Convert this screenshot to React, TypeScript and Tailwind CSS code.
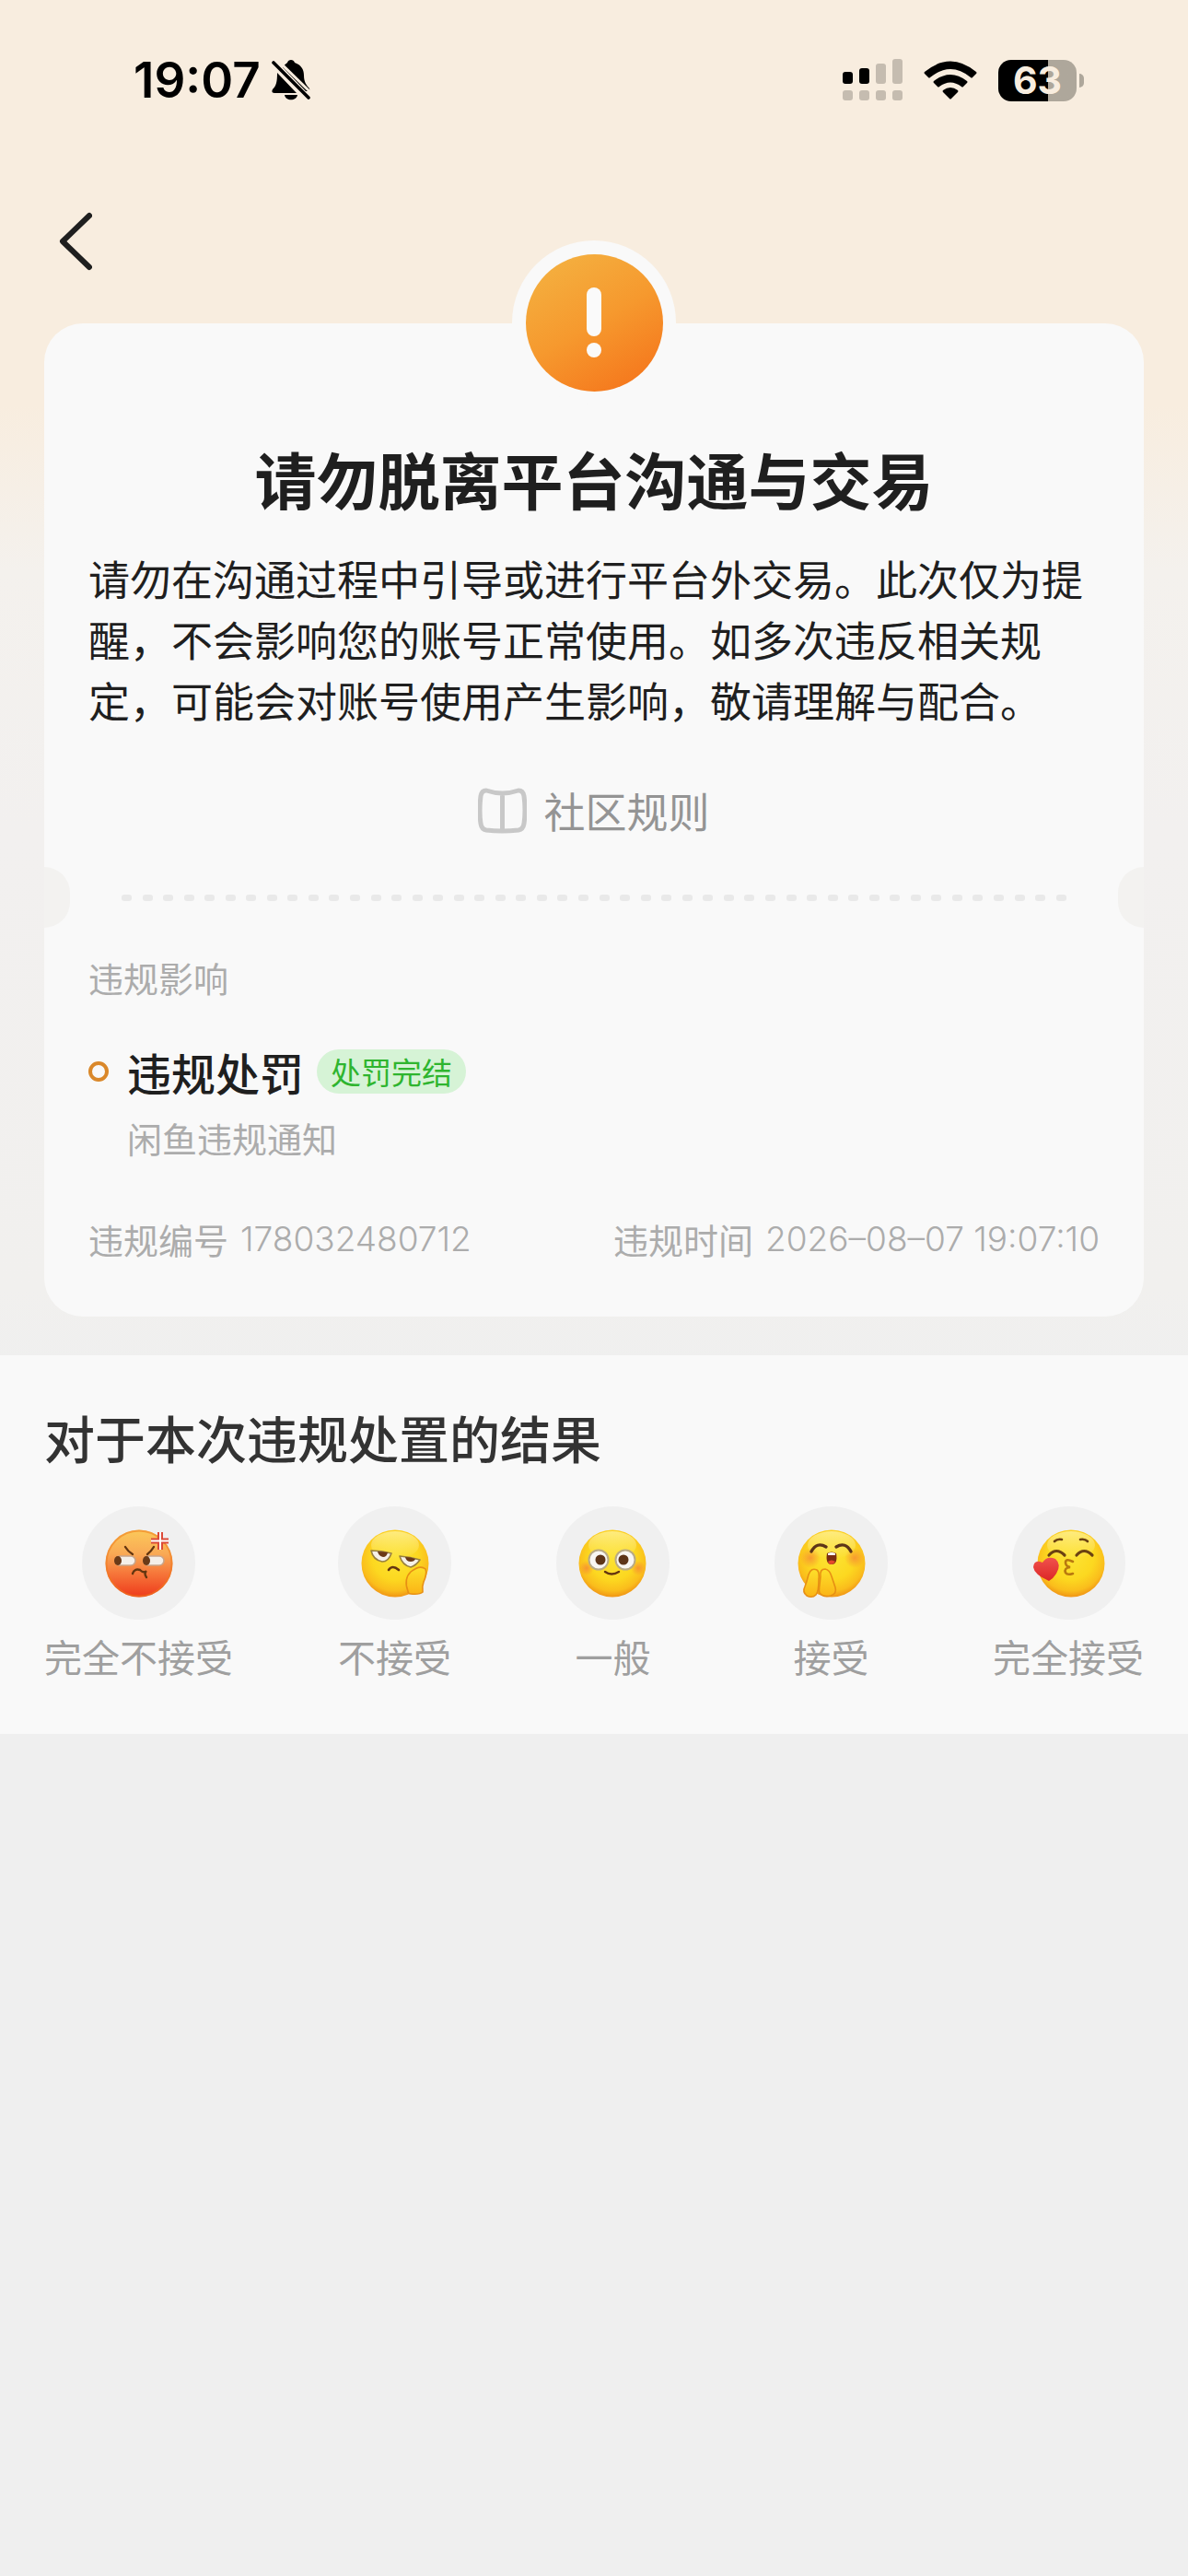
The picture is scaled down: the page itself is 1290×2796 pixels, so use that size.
import type { ReactNode } from "react";

function StatusBar() {
  return (
    <div className="flex h-[174px] items-center justify-between pl-[145px] pr-[113px]">
      <div className="flex items-center gap-3">
        <time className="font-['Inter',sans-serif] text-[53px] font-semibold leading-none text-black">19:07</time>
        <svg className="h-[46px] w-[44px]" viewBox="0 0 44 46" aria-label="静音">
          <path
            d="M12 9C14 6 16 5 17 4C18 0 24 0 25 4C33 7 35 12 35 18C35 25 38 29 41 32Q42 34 40 35L37 35Z"
            fill="#000"
          />
          <path d="M6 15L27 37H3Q-1 37 1 33C5 29 6 25 6 15ZM14 39H28C27 46 15 46 14 39Z" fill="#000" />
          <path d="M5 0L44 38" stroke="#f8eddf" strokeWidth="3" />
          <path d="M2 4L40 42" stroke="#000" strokeWidth="3.6" strokeLinecap="round" />
        </svg>
      </div>
      <div className="flex items-center gap-[23px]">
        <svg className="h-[46px] w-[65px]" viewBox="0 0 65 46" aria-label="信号">
          <rect x="0" y="14" width="11" height="13" rx="3" />
          <rect x="18" y="10" width="11" height="17" rx="3" />
          <g fill="#c5bcb0">
            <rect x="36" y="5" width="11" height="22" rx="3" />
            <rect x="54" y="0" width="11" height="27" rx="3" />
            <rect x="0" y="34" width="11" height="11" rx="3" />
            <rect x="18" y="34" width="11" height="11" rx="3" />
            <rect x="36" y="34" width="11" height="11" rx="3" />
            <rect x="54" y="34" width="11" height="11" rx="3" />
          </g>
        </svg>
        <svg className="h-[43px] w-[58px]" viewBox="0 0 58 43" aria-label="无线网络">
          <path d="M1 12Q29 -11 57 12Q58 13 57 14L53 18Q52 19 51 18Q29 0 7 18Q6 19 5 18L1 14Q0 13 1 12Z" />
          <path d="M11 22Q29 8 47 22Q48 23 47 24L43 28Q42 29 41 28Q29 19 17 28Q16 29 15 28L11 24Q10 23 11 22Z" />
          <path d="M21 32Q29 26 37 32Q38 33 37 34L30 41Q29 42 28 41L21 34Q20 33 21 32Z" />
        </svg>
        <div className="flex items-center gap-[3px]" aria-label="电量 63%">
          <div className="flex h-[45px] w-[85px] items-center justify-center rounded-[14px] bg-linear-to-r from-black from-[63%] to-[#aea79b] to-[63%]">
            <span className="font-['Inter',sans-serif] text-[41px] font-bold leading-none text-[#f8eddf]">63</span>
          </div>
          <div className="h-[15px] w-[5px] rounded-r-full bg-[#aea79b]" />
        </div>
      </div>
    </div>
  );
}

function AlertBadge() {
  return (
    <div className="absolute -top-[90px] left-1/2 flex size-[178px] -translate-x-1/2 items-center justify-center rounded-full bg-[#f9f9f9]">
      <div className="flex size-[149px] flex-col items-center justify-center gap-[7px] rounded-full bg-[linear-gradient(150deg,#f4b040_8%,#f6992e_50%,#f5761c_92%)]">
        <div className="h-[53px] w-4 rounded-full bg-[#fafafa]" />
        <div className="size-4 rounded-full bg-[#fafafa]" />
      </div>
    </div>
  );
}

function TicketDivider() {
  return (
    <div className="flex items-center justify-between">
      <div className="h-[66px] w-7 rounded-r-full bg-[#f3f2f0]" />
      <div className="mx-14 flex flex-1 justify-between">
        {Array.from({ length: 46 }, (_, i) => (
          <div key={i} className="h-[7px] w-[11px] rounded-[3px] bg-[#e9e9e9]" />
        ))}
      </div>
      <div className="h-[66px] w-7 rounded-l-full bg-[#f3f2f0]" />
    </div>
  );
}

function FaceDefs() {
  return (
    <svg className="absolute size-0" aria-hidden="true">
      <defs>
        <radialGradient id="yellow" cx="0.5" cy="0.4" r="0.62">
          <stop offset="0" stopColor="#fce334" />
          <stop offset="0.55" stopColor="#fcd820" />
          <stop offset="0.82" stopColor="#fabd1c" />
          <stop offset="1" stopColor="#ee8c14" />
        </radialGradient>
        <linearGradient id="shine" x1="0" y1="0" x2="0" y2="1">
          <stop offset="0" stopColor="#fff3a0" stopOpacity="0.75" />
          <stop offset="1" stopColor="#fff3a0" stopOpacity="0" />
        </linearGradient>
        <linearGradient id="red" x1="0" y1="0" x2="0" y2="1">
          <stop offset="0" stopColor="#fbc95a" />
          <stop offset="0.35" stopColor="#f9aa55" />
          <stop offset="0.65" stopColor="#f6763a" />
          <stop offset="1" stopColor="#ee3a1b" />
        </linearGradient>
        <linearGradient id="hand" x1="0" y1="0" x2="0" y2="1">
          <stop offset="0" stopColor="#fde02a" />
          <stop offset="1" stopColor="#fbb416" />
        </linearGradient>
        <linearGradient id="heart" x1="0" y1="0" x2="0" y2="1">
          <stop offset="0" stopColor="#f0524c" />
          <stop offset="1" stopColor="#dc2626" />
        </linearGradient>
        <radialGradient id="blush">
          <stop offset="0" stopColor="#f5793a" stopOpacity="0.65" />
          <stop offset="1" stopColor="#f5793a" stopOpacity="0" />
        </radialGradient>
      </defs>
    </svg>
  );
}

function YellowHead({ cx = 41 }: { cx?: number }) {
  return (
    <>
      <circle cx={cx} cy="41" r="36.5" fill="url(#yellow)" />
      <ellipse cx={cx} cy="21" rx="26" ry="15" fill="url(#shine)" />
    </>
  );
}

function AngryFace() {
  return (
    <>
      <circle cx="41" cy="41" r="36.5" fill="url(#red)" />
      <circle cx="41" cy="41" r="35.5" fill="none" stroke="#ee7a1c" strokeOpacity="0.55" strokeWidth="2" />
      <g fill="#f4efe9" stroke="#c9a58a" strokeWidth="1.6">
        <rect x="15" y="33" width="22" height="10" rx="5" />
        <rect x="46" y="33" width="22" height="10" rx="5" />
      </g>
      <ellipse cx="18" cy="38" rx="4" ry="5" fill="#6b3a17" />
      <ellipse cx="49" cy="38" rx="4" ry="5" fill="#6b3a17" />
      <g fill="none" stroke="#643610" strokeWidth="2.4" strokeLinecap="round">
        <path d="M26 23Q29 28 34 31M57 23Q54 28 50 31" />
        <path d="M34 52Q36 46 42 48Q46 52 49 49Q46 52 49 56" />
      </g>
      <path d="M64 7V26M54 16.5H73" fill="none" stroke="#fff" strokeWidth="5" />
      <path
        d="M62 7V14.5H54M66 7V14.5H73M62 26V18.5H54M66 26V18.5H73"
        fill="none"
        stroke="#dc4a38"
        strokeWidth="2"
      />
    </>
  );
}

function UnhappyFace() {
  return (
    <>
      <YellowHead />
      <g fill="#f6f1e8" stroke="#98803f" strokeWidth="1.6" strokeLinejoin="round">
        <path d="M15 27Q26 27 37 30Q34 39 27 39Q17 37 15 27Z" />
        <path d="M46 33Q58 34 68 37Q64 43 58 45Q49 43 46 33Z" />
      </g>
      <path
        d="M22 28Q28 28 33 29Q32 34 28 34Q23 33 22 28ZM52 34Q58 34 63 36Q62 39 58 39Q53 39 52 34Z"
        fill="#6b3a17"
      />
      <path d="M34 48Q38 42 45 48" fill="none" stroke="#643610" strokeWidth="2.6" strokeLinecap="round" />
      <path
        d="M55 71Q50 58 58 50Q68 42 74 47Q76 52 72 61Q70 66 71 72Q68 75 58 74Q55 74 55 71Z"
        fill="url(#hand)"
        stroke="#e78f14"
        strokeWidth="1.6"
      />
    </>
  );
}

function NeutralFace() {
  return (
    <>
      <YellowHead cx={40} />
      <circle cx="12" cy="46" r="8" fill="url(#blush)" />
      <circle cx="68" cy="46" r="8" fill="url(#blush)" />
      <g fill="#f8f6f2" stroke="#b9aa84" strokeWidth="2">
        <circle cx="25" cy="37" r="10.5" />
        <circle cx="54" cy="37" r="10.5" />
      </g>
      <circle cx="27" cy="37" r="5.5" fill="#5d3518" />
      <circle cx="52" cy="37" r="5.5" fill="#5d3518" />
      <path d="M32 50Q39 55 47 50" fill="none" stroke="#643610" strokeWidth="2.4" strokeLinecap="round" />
    </>
  );
}

function HappyFace() {
  return (
    <>
      <YellowHead />
      <circle cx="18" cy="35" r="11" fill="url(#blush)" />
      <circle cx="66" cy="35" r="11" fill="url(#blush)" />
      <path
        d="M19 28Q25 17 35 23M46 23Q56 17 62 28"
        fill="none"
        stroke="#5d3518"
        strokeWidth="3.4"
        strokeLinecap="round"
      />
      <path d="M36 30Q41 27 46 30Q48 42 41 42Q34 42 36 30Z" fill="#7a2d12" />
      <path d="M37 30Q41 28 45 30V32H37Z" fill="#fff" />
      <path d="M37 39Q41 36 45 39Q43 42 41 42Q38 42 37 39Z" fill="#e5482c" />
      <g fill="url(#hand)" stroke="#e78f14" strokeWidth="1.6">
        <path d="M16 53Q19 45 25 48Q28 50 27 58Q27 72 24 75Q20 79 14 76Q9 72 12 66Q14 61 16 53Z" />
        <path d="M29 55Q28 47 34 47Q39 48 41 55L45 67Q47 74 40 76Q32 78 28 73Q27 71 28 64Z" />
      </g>
    </>
  );
}

function KissFace() {
  return (
    <>
      <YellowHead cx={44} />
      <g fill="none" stroke="#6b4212" strokeLinecap="round">
        <path d="M26 17Q29 14 34 15M54 15Q59 14 62 17" strokeWidth="2.6" />
        <path d="M20 32Q28 23 37 32M50 32Q58 23 67 32" strokeWidth="3.2" />
        <path d="M46 39Q38 35 38 40Q38 44 43 45Q36 46 38 51Q40 54 46 52" stroke="#b9790f" strokeWidth="2.6" />
      </g>
      <path d="M20 60Q4 53 3 45Q4 36 13 40Q18 32 27 36Q34 42 28 52Q25 57 20 60Z" fill="url(#heart)" />
    </>
  );
}

const choices: { label: string; face: ReactNode }[] = [
  { label: "完全不接受", face: <AngryFace /> },
  { label: "不接受", face: <UnhappyFace /> },
  { label: "一般", face: <NeutralFace /> },
  { label: "接受", face: <HappyFace /> },
  { label: "完全接受", face: <KissFace /> },
];

function RecordField({ label, value }: { label: string; value: string }) {
  return (
    <p className="flex items-center gap-[13px]">
      <span>{label}</span>
      <span className="font-['Inter',sans-serif] text-[37px] font-light">{value}</span>
    </p>
  );
}

export default function App() {
  return (
    <div
      lang="zh-CN"
      className="min-h-screen bg-[#efefef] bg-[linear-gradient(#f8eddf_0px,#f8eddf_440px,#f4f1ed_620px,#f2f0ef_900px,#f1f0ee_1400px,#efefef_1500px)] bg-no-repeat font-['Noto_Sans_CJK_SC',sans-serif] text-[#1f1f1f]"
    >
      <FaceDefs />
      <StatusBar />
      <header className="flex h-[177px] items-start px-12 pt-[50px]">
        <button type="button" aria-label="返回" className="flex h-[76px] w-16 items-center pl-4">
          <svg
            className="h-16 w-9"
            viewBox="0 0 36 64"
            fill="none"
            stroke="#1f1f1f"
            strokeWidth="6"
            strokeLinecap="round"
            strokeLinejoin="round"
          >
            <path d="M33 4L4 32L33 60" />
          </svg>
        </button>
      </header>

      <main>
        <section className="relative mx-12 rounded-[42px] bg-[#f9f9f9]">
          <AlertBadge />
          <div className="px-12 pt-[126px]">
            <h1 className="text-center text-[67px] font-bold leading-[84px]">请勿脱离平台沟通与交易</h1>
            <p className="mt-[34px] text-[45px] leading-[66px]">
              请勿在沟通过程中引导或进行平台外交易。此次仅为提醒，不会影响您的账号正常使用。如多次违反相关规定，可能会对账号使用产生影响，敬请理解与配合。
            </p>
            <div className="mt-[54px] flex justify-center">
              <a href="#rules" className="flex items-center gap-[18px] text-[45px] leading-[66px] text-[#949494]">
                <svg
                  className="h-[50px] w-[53px]"
                  viewBox="0 0 53 50"
                  fill="none"
                  stroke="#c8c8c8"
                  strokeWidth="5"
                  strokeLinejoin="round"
                  aria-hidden="true"
                >
                  <path d="M26.5 6Q18 6 9 3Q4 3 3 9Q1 25 3 39Q4 45 9 46Q26 48 44 46Q49 45 50 39Q52 25 50 9Q49 3 44 3Q35 6 26.5 6ZM26.5 6V46" />
                </svg>
                社区规则
              </a>
            </div>
          </div>
          <div className="mt-7">
            <TicketDivider />
          </div>
          <div className="px-12 pb-14 pt-[26px] text-[38px] leading-[56px] text-[#acacac]">
            <h2>违规影响</h2>
            <div className="mt-[38px] flex items-center">
              <span className="size-[22px] rounded-full border-4 border-[#da882a]" />
              <h3 className="ml-5 text-[48px] font-medium leading-[72px] text-[#1f1f1f]">违规处罚</h3>
              <span className="ml-[14px] flex h-12 items-center rounded-full bg-[#d6f3d6] px-[15px] text-[33px] leading-none text-[#2fb52f]">
                处罚完结
              </span>
            </div>
            <p className="ml-[42px] mt-2">闲鱼违规通知</p>
            <div className="mt-[54px] flex justify-between">
              <RecordField label="违规编号" value="178032480712" />
              <RecordField label="违规时间" value="2026–08–07 19:07:10" />
            </div>
          </div>
        </section>

        <section className="mt-[42px] bg-[#f9f9f9] px-12 pb-[54px] pt-12">
          <h2 className="text-[55px] font-medium leading-[80px] text-[#333333]">对于本次违规处置的结果</h2>
          <div className="mt-9 flex justify-between">
            {choices.map((choice) => (
              <button
                key={choice.label}
                type="button"
                className="flex flex-col items-center gap-2 text-[41px] leading-[62px] text-[#9f9f9f]"
              >
                <span className="flex size-[123px] items-center justify-center rounded-full bg-[#f0f0f0]">
                  <svg className="size-[82px]" viewBox="0 0 82 82" aria-hidden="true">
                    {choice.face}
                  </svg>
                </span>
                {choice.label}
              </button>
            ))}
          </div>
        </section>
      </main>
    </div>
  );
}
